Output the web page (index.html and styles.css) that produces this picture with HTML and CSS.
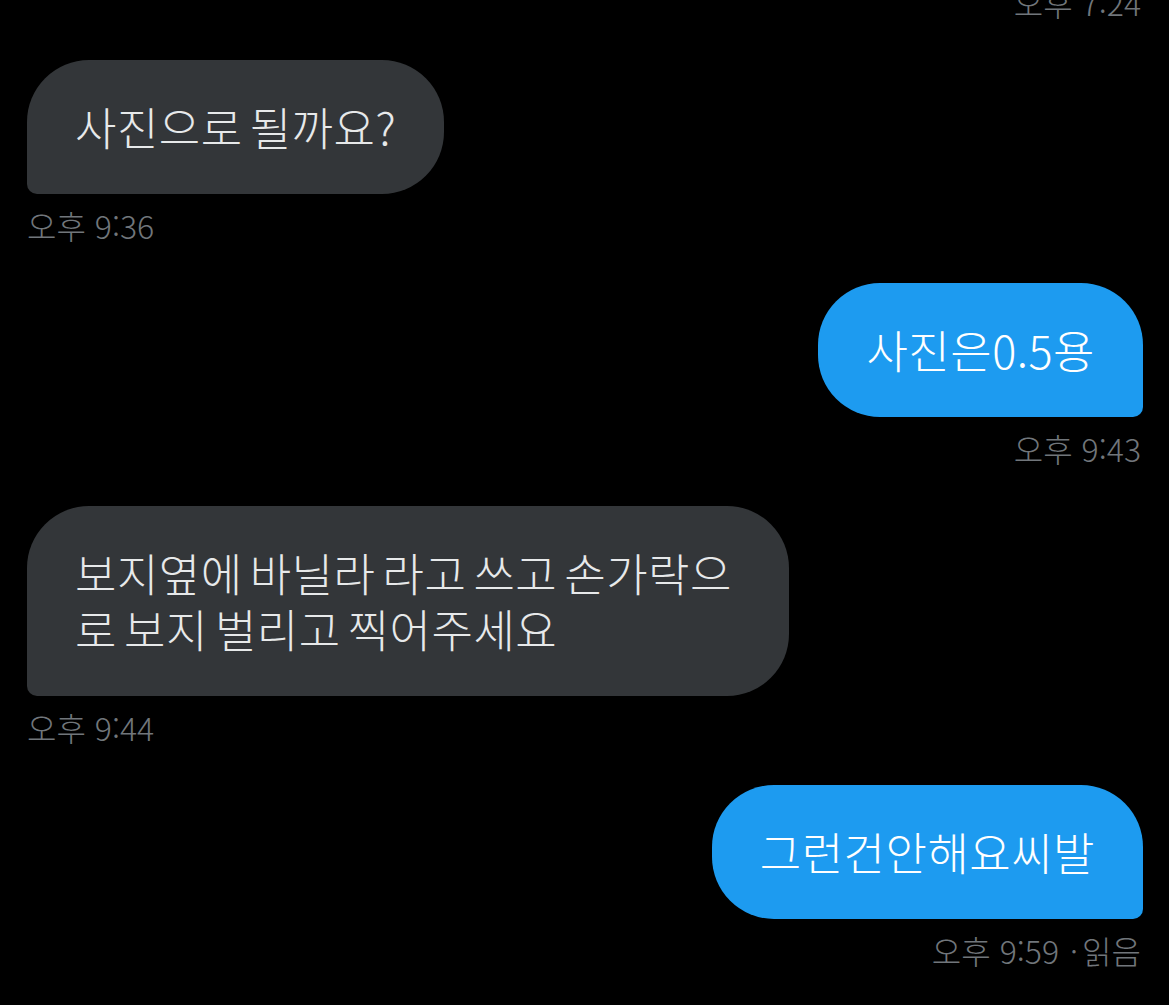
FILE: index.html
```html
<!DOCTYPE html>
<html lang="ko">
<head>
<meta charset="utf-8">
<title>DM</title>
<link rel="stylesheet" href="styles.css">
</head>
<body>
<main class="thread">
  <div class="meta meta-right meta-top">오후 7:24</div>

  <div class="msg msg-in">
    <div class="bubble bubble-in">사진으로 될까요?</div>
    <div class="meta">오후 9:36</div>
  </div>

  <div class="msg msg-out">
    <div class="bubble bubble-out">사진은0.5용</div>
    <div class="meta meta-right">오후 9:43</div>
  </div>

  <div class="msg msg-in">
    <div class="bubble bubble-in bubble-wide">보지옆에 바닐라 라고 쓰고 손가락으로 보지 벌리고 찍어주세요</div>
    <div class="meta">오후 9:44</div>
  </div>

  <div class="msg msg-out">
    <div class="bubble bubble-out">그런건안해요씨발</div>
    <div class="meta meta-right">오후 9:59 <span class="dot">·</span>읽음</div>
  </div>
</main>
</body>
</html>
```

FILE: styles.css
```css
html, body {
  margin: 0;
  padding: 0;
  background: #000;
}

body {
  font-family: "Noto Sans CJK KR", "Noto Sans", "Liberation Sans", sans-serif;
  color: #e7e9ea;
  overflow: hidden;
}

.thread {
  display: flex;
  flex-direction: column;
  padding: 0 26px 0 27px;
}

.meta {
  font-size: 32px;
  line-height: 36px;
  font-weight: 300;
  color: #71767b;
  margin-top: 13px;
}

.meta-right {
  text-align: right;
  padding-right: 2px;
}

.meta-top {
  margin-top: -16px;
  margin-bottom: 40px;
}

.msg {
  display: flex;
  flex-direction: column;
  margin-bottom: 40px;
}

.msg-in {
  align-items: flex-start;
}

.msg-out {
  align-items: flex-end;
}

.msg-out .meta {
  align-self: stretch;
}

.bubble {
  font-size: 45px;
  line-height: 56px;
  font-weight: 300;
  letter-spacing: 0.5px;
  padding: 39px 48px;
  max-width: 666px;
  word-break: break-all;
  word-spacing: -6px;
  border-radius: 62px;
}

.bubble-in {
  background: #333639;
  color: #e7e9ea;
  border-bottom-left-radius: 10px;
}

.bubble-out {
  background: #1d9bf0;
  color: #fff;
  border-bottom-right-radius: 10px;
}

.dot {
  margin: 0 4px 0 2px;
}
```
